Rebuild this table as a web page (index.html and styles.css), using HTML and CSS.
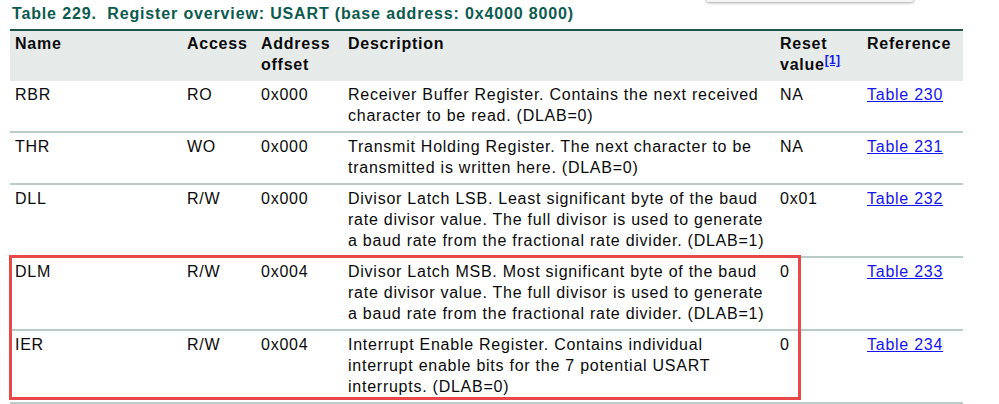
FILE: index.html
```html
<!DOCTYPE html>
<html>
<head>
<meta charset="utf-8">
<link rel="stylesheet" href="styles.css">
</head>
<body>
<div class="popup"></div>
<div class="page">
  <div class="title">Table 229.&nbsp; Register overview: USART (base address: 0x4000 8000)</div>
  <div class="wrap">
    <table class="reg">
      <colgroup>
        <col class="c-name"><col class="c-acc"><col class="c-addr"><col class="c-desc"><col class="c-reset"><col class="c-ref">
      </colgroup>
      <thead>
        <tr>
          <th>Name</th>
          <th>Access</th>
          <th>Address<br>offset</th>
          <th>Description</th>
          <th>Reset<br>value<sup><a href="#">[1]</a></sup></th>
          <th>Reference</th>
        </tr>
      </thead>
      <tbody>
        <tr>
          <td>RBR</td><td>RO</td><td>0x000</td>
          <td>Receiver Buffer Register. Contains the next received<br>character to be read. (DLAB=0)</td>
          <td>NA</td><td><a href="#">Table 230</a></td>
        </tr>
        <tr>
          <td>THR</td><td>WO</td><td>0x000</td>
          <td>Transmit Holding Register. The next character to be<br>transmitted is written here. (DLAB=0)</td>
          <td>NA</td><td><a href="#">Table 231</a></td>
        </tr>
        <tr>
          <td>DLL</td><td>R/W</td><td>0x000</td>
          <td>Divisor Latch LSB. Least significant byte of the baud<br>rate divisor value. The full divisor is used to generate<br>a baud rate from the fractional rate divider. (DLAB=1)</td>
          <td>0x01</td><td><a href="#">Table 232</a></td>
        </tr>
        <tr>
          <td>DLM</td><td>R/W</td><td>0x004</td>
          <td>Divisor Latch MSB. Most significant byte of the baud<br>rate divisor value. The full divisor is used to generate<br>a baud rate from the fractional rate divider. (DLAB=1)</td>
          <td>0</td><td><a href="#">Table 233</a></td>
        </tr>
        <tr>
          <td>IER</td><td>R/W</td><td>0x004</td>
          <td>Interrupt Enable Register. Contains individual<br>interrupt enable bits for the 7 potential USART<br>interrupts. (DLAB=0)</td>
          <td>0</td><td><a href="#">Table 234</a></td>
        </tr>
      </tbody>
    </table>
    <div class="highlight"></div>
  </div>
</div>
</body>
</html>
```

FILE: styles.css
```css
html, body {
  margin: 0;
  padding: 0;
  background: #ffffff;
}
body {
  font-family: "Liberation Sans", Arial, sans-serif;
  color: #0a0a0a;
  width: 999px;
  height: 404px;
  overflow: hidden;
  position: relative;
}
.popup {
  position: absolute;
  left: 706px;
  top: -12px;
  width: 208px;
  height: 14px;
  background: #f4f4f4;
  border-radius: 3px;
  box-shadow: 0 1px 3px rgba(0,0,0,0.35);
}
.page {
  padding: 4px 0 0 12px;
}
.title {
  font-size: 16px;
  line-height: 20px;
  font-weight: bold;
  letter-spacing: 0.85px;
  color: #0b5a4e;
  margin-bottom: 5px;
}
.wrap {
  position: relative;
  margin-left: -2px;
  width: 953px;
}
.reg {
  border-collapse: collapse;
  width: 953px;
  table-layout: fixed;
  font-size: 16px;
  line-height: 21px;
  letter-spacing: 0.75px;
  border-top: 2px solid #1f5546;
}
.c-name { width: 172px; }
.c-acc { width: 74px; }
.c-addr { width: 87px; }
.c-desc { width: 432px; }
.c-reset { width: 87px; }
.c-ref { width: 101px; }
.reg th {
  background: #e6ebea;
  text-align: left;
  vertical-align: top;
  font-weight: bold;
  padding: 2px 5px 6px 5px;
}
.reg td {
  vertical-align: top;
  padding: 3px 5px 5px 5px;
  white-space: nowrap;
  border-bottom: 2px solid #b9ccc8;
}
.reg a {
  color: #1515f0;
  text-decoration: underline;
}
.reg sup {
  font-size: 12px;
  line-height: 0;
  letter-spacing: 0.3px;
  vertical-align: 6px;
}
.highlight {
  position: absolute;
  left: -1px;
  top: 226px;
  width: 786px;
  height: 139px;
  border: 3px solid #e84848;
  pointer-events: none;
}
```
